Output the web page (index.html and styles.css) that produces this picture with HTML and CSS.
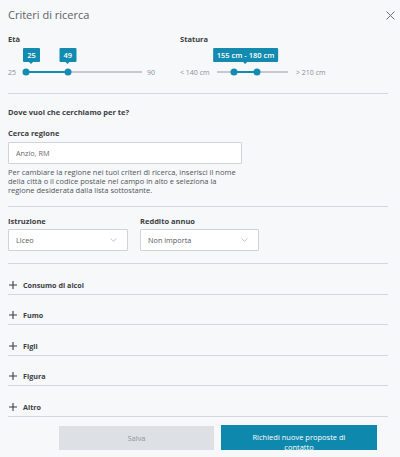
FILE: index.html
```
<!DOCTYPE html>
<html lang="it">
<head>
<meta charset="utf-8">
<title>Criteri di ricerca</title>
<link rel="stylesheet" href="styles.css">
</head>
<body>
<div class="panel">
  <header class="header">
    <h1 class="title">Criteri di ricerca</h1>
    <button class="close" aria-label="Chiudi">
      <svg width="9" height="9" viewBox="0 0 9 9"><path d="M0.5 0.5 L8.5 8.5 M8.5 0.5 L0.5 8.5" stroke="#6b6f75" stroke-width="1" fill="none"/></svg>
    </button>
  </header>

  <section class="ranges">
    <div class="range range-age">
      <div class="label">Età</div>
      <div class="slider">
        <span class="end end-min">25</span>
        <div class="track track-age">
          <div class="fill" style="--a:0;--b:0.369"></div>
          <span class="thumb" style="--p:0"></span>
          <span class="thumb" style="--p:0.369"></span>
          <span class="tip tip-start" style="--p:0">25</span>
          <span class="tip" style="--p:0.369">49</span>
        </div>
        <span class="end end-max">90</span>
      </div>
    </div>
    <div class="range range-height">
      <div class="label">Statura</div>
      <div class="slider">
        <span class="end end-min">&lt; 140 cm</span>
        <div class="track track-height">
          <div class="fill" style="--a:0.214;--b:0.571"></div>
          <span class="thumb" style="--p:0.214"></span>
          <span class="thumb" style="--p:0.571"></span>
          <span class="tip" style="--p:0.3925">155 cm - 180 cm</span>
        </div>
        <span class="end end-max">&gt; 210 cm</span>
      </div>
    </div>
  </section>

  <section class="region">
    <div class="label question">Dove vuoi che cerchiamo per te?</div>
    <div class="label">Cerca regione</div>
    <div class="input">Anzio, RM</div>
    <p class="help">Per cambiare la regione nei tuoi criteri di ricerca, inserisci il nome della città o il codice postale nel campo in alto e seleziona la regione desiderata dalla lista sottostante.</p>
  </section>

  <section class="selects">
    <div class="field">
      <div class="label">Istruzione</div>
      <div class="select select-edu"><span>Liceo</span><svg class="chev" width="7" height="4" viewBox="0 0 7 4"><path d="M0.5 0.5 L3.5 3.3 L6.5 0.5" stroke="#b9bec5" stroke-width="0.9" fill="none"/></svg></div>
    </div>
    <div class="field">
      <div class="label">Reddito annuo</div>
      <div class="select select-income"><span>Non importa</span><svg class="chev" width="7" height="4" viewBox="0 0 7 4"><path d="M0.5 0.5 L3.5 3.3 L6.5 0.5" stroke="#b9bec5" stroke-width="0.9" fill="none"/></svg></div>
    </div>
  </section>

  <ul class="accordion">
    <li class="acc-item"><svg class="plus" width="8" height="8" viewBox="0 0 8 8"><path d="M4 0 V8 M0 4 H8" stroke="#3a3d42" stroke-width="1.1"/></svg><span>Consumo di alcol</span></li>
    <li class="acc-item"><svg class="plus" width="8" height="8" viewBox="0 0 8 8"><path d="M4 0 V8 M0 4 H8" stroke="#3a3d42" stroke-width="1.1"/></svg><span>Fumo</span></li>
    <li class="acc-item"><svg class="plus" width="8" height="8" viewBox="0 0 8 8"><path d="M4 0 V8 M0 4 H8" stroke="#3a3d42" stroke-width="1.1"/></svg><span>Figli</span></li>
    <li class="acc-item"><svg class="plus" width="8" height="8" viewBox="0 0 8 8"><path d="M4 0 V8 M0 4 H8" stroke="#3a3d42" stroke-width="1.1"/></svg><span>Figura</span></li>
    <li class="acc-item"><svg class="plus" width="8" height="8" viewBox="0 0 8 8"><path d="M4 0 V8 M0 4 H8" stroke="#3a3d42" stroke-width="1.1"/></svg><span>Altro</span></li>
  </ul>

  <footer class="actions">
    <button class="btn btn-save">Salva</button>
    <button class="btn btn-primary">Richiedi nuove proposte di contatto</button>
  </footer>
</div>
</body>
</html>
```

FILE: styles.css
```
* { box-sizing: border-box; }

html, body {
  margin: 0;
  padding: 0;
  background: #f7f8fa;
}

body {
  font-family: "Open Sans", "Noto Sans", sans-serif;
  color: #444;
  width: 400px;
  height: 457px;
  overflow: hidden;
}

.panel {
  padding: 0 12px 0 8px;
}

.header {
  display: flex;
  justify-content: space-between;
  align-items: center;
  padding-top: 8px;
  margin-right: -7px;
}

.title {
  margin: 0;
  font-size: 11px;
  line-height: 14px;
  font-weight: 400;
  color: #5d6167;
}

.close {
  border: 0;
  background: none;
  padding: 0;
  width: 9px;
  height: 9px;
  display: flex;
  cursor: pointer;
}

.label {
  font-size: 7.5px;
  line-height: 10px;
  font-weight: 700;
  color: #3a3d42;
}

/* ranges */
.ranges {
  display: flex;
  margin-top: 12px;
  padding-bottom: 16px;
  border-bottom: 1px solid #d4d8dd;
}

.range-age { width: 172px; }

.slider {
  display: flex;
  align-items: center;
  height: 10px;
  margin-top: 23px;
}

.end {
  font-size: 7px;
  color: #8a8f96;
  white-space: nowrap;
}

.range-age .end-min { width: 15px; }
.range-age .end-max { margin-left: 5px; }
.range-height .end-min { width: 37px; }
.range-height .end-max { margin-left: 8px; }

.track {
  position: relative;
  height: 2px;
  background: #c7cbd0;
}

.track-age { width: 119px; }
.track-height { width: 71px; }

.fill {
  position: absolute;
  top: 0;
  height: 2px;
  background: #138bb0;
  left: calc(3px + (100% - 6px) * var(--a));
  width: calc((100% - 6px) * (var(--b) - var(--a)));
}

.thumb {
  position: absolute;
  top: 50%;
  width: 7px;
  height: 7px;
  border-radius: 50%;
  background: #138bb0;
  left: calc(3px + (100% - 6px) * var(--p));
  transform: translate(-50%, -50%);
}

.tip {
  position: absolute;
  bottom: calc(100% + 9px);
  left: calc(3px + (100% - 6px) * var(--p));
  transform: translateX(-50%);
  height: 14px;
  padding: 0 4px;
  min-width: 17px;
  background: #138bb0;
  color: #fff;
  font-size: 7.5px;
  line-height: 14px;
  font-weight: 600;
  text-align: center;
  white-space: nowrap;
  border-radius: 1px;
}

.tip::after {
  content: "";
  position: absolute;
  left: 50%;
  top: 100%;
  margin-left: -2.5px;
  border-left: 2.5px solid transparent;
  border-right: 2.5px solid transparent;
  border-top: 2.5px solid #138bb0;
}

.tip-start {
  transform: translateX(-3px);
}

/* region */
.region {
  padding-top: 13px;
  padding-bottom: 11px;
  border-bottom: 1px solid #d4d8dd;
}

.region .question { margin-bottom: 11px; }

.input {
  margin-top: 4px;
  width: 234px;
  height: 22px;
  background: #fff;
  border: 1px solid #cfd3d8;
  border-radius: 1px;
  padding-left: 7px;
  font-size: 7.3px;
  line-height: 20px;
  color: #666a70;
}

.help {
  margin: 4px 0 0;
  width: 236px;
  font-size: 7.5px;
  line-height: 9px;
  color: #50545a;
}

/* selects */
.selects {
  display: flex;
  gap: 12px;
  padding-top: 9px;
  padding-bottom: 12px;
  border-bottom: 1px solid #d4d8dd;
}

.select {
  margin-top: 3px;
  height: 22px;
  background: #fff;
  border: 1px solid #cfd3d8;
  border-radius: 1px;
  display: flex;
  align-items: center;
  justify-content: space-between;
  padding: 0 10px 0 7px;
  font-size: 7.3px;
  color: #55595f;
}

.select-edu { width: 120px; }
.select-income { width: 119px; }

/* accordion */
.accordion {
  list-style: none;
  margin: 0;
  padding: 0;
}

.acc-item {
  display: flex;
  align-items: center;
  gap: 6px;
  height: 30.6px;
  padding-top: 15.6px;
  padding-bottom: 4px;
  line-height: 10px;
  border-bottom: 1px solid #d4d8dd;
  font-size: 7.2px;
  font-weight: 700;
  color: #3a3d42;
}

.plus { flex: none; margin-left: 1px; }

/* actions */
.actions {
  display: flex;
  justify-content: flex-end;
  gap: 7px;
  margin-top: 9px;
  padding-right: 11px;
}

.btn {
  border: 0;
  border-radius: 0;
  height: 24px;
  font-family: inherit;
  font-size: 7.5px;
  line-height: 10px;
  cursor: pointer;
}

.btn-save {
  width: 155px;
  background: #dde1e6;
  color: #90959c;
}

.btn-primary {
  width: 156px;
  height: 25px;
  background: #0f88ad;
  color: #fff;
  padding: 7px 28px 0;
  align-self: flex-start;
  display: block;
  overflow: visible;
  margin-top: -1px;
}
```
